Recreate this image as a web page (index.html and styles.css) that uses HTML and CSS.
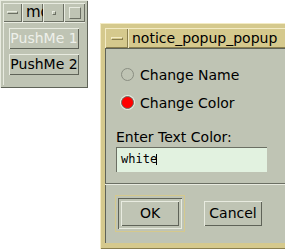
FILE: index.html
```html
<!DOCTYPE html>
<html>
<head>
<meta charset="utf-8">
<link rel="stylesheet" href="styles.css">
</head>
<body>
<div class="win small">
  <div class="titlebar">
    <div class="tbtn"><span class="minus"></span></div>
    <div class="ttl">mo</div>
    <div class="tbtn w20"><span class="dot"></span></div>
    <div class="tbtn w20"><span class="sq"></span></div>
  </div>
  <div class="small-body">
    <div class="pbtn light">PushMe 1</div>
    <div class="pbtn">PushMe 2</div>
  </div>
</div>

<div class="win dialog">
  <div class="titlebar gold">
    <div class="tbtn gold-btn"><span class="minus"></span></div>
    <div class="ttl gold-ttl">notice_popup_popup</div>
  </div>
  <div class="dlg-body">
    <div class="radios">
      <div class="radio"><span class="circle"></span>Change Name</div>
      <div class="radio"><span class="circle on"></span>Change Color</div>
    </div>
    <div class="label">Enter Text Color:</div>
    <div class="field">white<span class="cursor"></span></div>
    <div class="sep"></div>
    <div class="actions">
      <div class="focus"><div class="btn ok"><div class="inner">OK</div></div></div>
      <div class="btn cancel">Cancel</div>
    </div>
  </div>
</div>
</body>
</html>
```
FILE: styles.css
```css
html, body { margin: 0; padding: 0; background: #ffffff; }
body { position: relative; width: 285px; height: 249px; overflow: hidden;
  font-family: "DejaVu Sans", "Liberation Sans", sans-serif; font-size: 13px; color: #000; }

.win { position: absolute; box-sizing: border-box; background: #bfc4b4; }
.small { left: 0; top: 0; width: 88px; height: 88px; padding: 3px;
  box-shadow: inset 1px 1px #e8ebe0, inset -1px -1px #5f6358;
  display: flex; flex-direction: column; }
.titlebar { display: flex; height: 19px; box-sizing: border-box; }
.tbtn { width: 19px; box-sizing: border-box; display: flex; align-items: center; justify-content: center;
  box-shadow: inset 1px 1px #e8ebe0, inset -1px -1px #6b6f63; }
.w20 { width: 21px; }
.minus { width: 11px; height: 3px; box-sizing: border-box; border-top: 1px solid #e8ebe0; border-left: 1px solid #e8ebe0;
  border-bottom: 1px solid #6b6f63; border-right: 1px solid #6b6f63; }
.dot { width: 4px; height: 4px; box-sizing: border-box; border-top: 1px solid #e8ebe0; border-left: 1px solid #e8ebe0;
  border-bottom: 1px solid #6b6f63; border-right: 1px solid #6b6f63; }
.sq { width: 12px; height: 12px; box-sizing: border-box; border-top: 1px solid #e8ebe0; border-left: 1px solid #e8ebe0;
  border-bottom: 1px solid #6b6f63; border-right: 1px solid #6b6f63; }
.ttl { flex: 1; overflow: hidden; white-space: nowrap; padding-left: 3px; line-height: 19px; font-size: 14px;
  box-shadow: inset 1px 1px #e8ebe0, inset -1px -1px #6b6f63; }
.small .ttl { width: 21px; flex: none; font-size: 15px; padding-left: 4px; box-sizing: border-box; }

.small-body { flex: 1; display: flex; flex-direction: column; gap: 5px; padding: 6px 6px 0 6px;
  box-shadow: inset 1px 1px #e8ebe0; }
.pbtn { height: 21px; flex: none; box-sizing: border-box; text-align: center; line-height: 21px; font-size: 14px;
  white-space: nowrap; overflow: hidden;
  box-shadow: inset 1px 1px #e8ebe0, inset -1px -1px #5f6358; }
.pbtn.light { color: #eef0ea; }

.dialog { left: 100px; top: 23px; width: 190px; height: 226px; background: #d5c98d; padding: 5px 0 6px 5px;
  box-shadow: inset 1px 1px #f3ebc4, inset -1px -1px #8a7f4e; display: flex; flex-direction: column; }
.titlebar.gold { height: 20px; }
.gold-btn { width: 23px; background: #d5c98d; box-shadow: inset 1px 1px #f3ebc4, inset -1px -1px #8a7f4e; }
.gold-btn .minus { width: 12px; border-top-color: #f3ebc4; border-left-color: #f3ebc4; border-bottom-color: #8a7f4e; border-right-color: #8a7f4e; }
.gold-ttl { background: #d5c98d; box-shadow: inset 1px 1px #f3ebc4, inset -1px -1px #8a7f4e; padding-left: 4px; line-height: 20px; font-size: 14px; }

.dlg-body { flex: 1; background: #bfc4b4; box-shadow: inset 1px 1px #5f6358; display: flex; flex-direction: column;
  padding: 19px 0 0 11px; }
.radios { display: flex; flex-direction: column; gap: 13px; padding-left: 5px; }
.radio { display: flex; align-items: center; height: 15px; flex: none; font-size: 14px; }
.circle { width: 13px; height: 13px; border-radius: 50%; box-sizing: border-box; border: 1px solid #8a8e82;
  margin-right: 6px; background: #bfc4b4; }
.circle.on { background: #ff0000; border: 1px solid #6b6f63; box-shadow: 0 0 0 1px #e8ebe0; }
.label { margin-top: 19px; font-size: 14px; height: 16px; line-height: 16px; flex: none; }
.field { margin-top: 2px; width: 151px; height: 25px; flex: none; box-sizing: border-box; background: #e2f2e0;
  box-shadow: inset 1px 1px #6b6f63; font-family: "DejaVu Sans Mono", "Liberation Mono", monospace; font-size: 12px;
  padding-left: 5px; line-height: 25px; display: flex; align-items: center; }
.cursor { display: inline-block; width: 1px; height: 11px; background: #000; margin-left: -1px; }
.sep { margin: 11px 0 0 -11px; height: 2px; flex: none; border-top: 1px solid #6b6f63; border-bottom: 1px solid #e8ebe0; box-sizing: border-box; }
.actions { display: flex; align-items: center; margin-top: 10px; gap: 19px; margin-left: -1px; }
.focus { border: 1px solid #d5c98d; padding: 2px; }
.btn { box-sizing: border-box; font-size: 14px; text-align: center;
  box-shadow: inset 1px 1px #e8ebe0, inset -1px -1px #5f6358; }
.ok { width: 64px; height: 31px; padding: 3px; box-shadow: inset 1px 1px #5f6358, inset -1px -1px #e8ebe0; }
.ok .inner { height: 25px; line-height: 25px; box-shadow: inset 1px 1px #e8ebe0, inset -1px -1px #5f6358; }
.cancel { width: 58px; height: 25px; line-height: 25px; }
```
